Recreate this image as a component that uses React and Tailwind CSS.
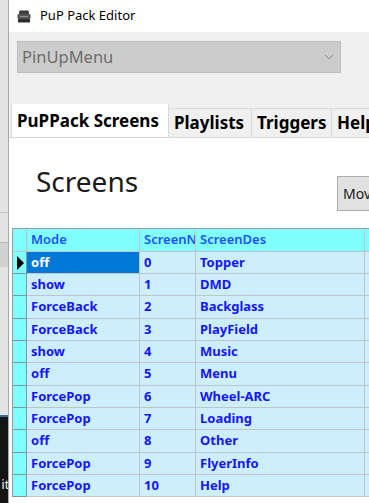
import React from "react";

const rows = [
  ["off", "0", "Topper"],
  ["show", "1", "DMD"],
  ["ForceBack", "2", "Backglass"],
  ["ForceBack", "3", "PlayField"],
  ["show", "4", "Music"],
  ["off", "5", "Menu"],
  ["ForcePop", "6", "Wheel-ARC"],
  ["ForcePop", "7", "Loading"],
  ["off", "8", "Other"],
  ["ForcePop", "9", "FlyerInfo"],
  ["ForcePop", "10", "Help"],
];

function AppIcon() {
  return (
    <svg width="14" height="13" viewBox="0 0 14 13">
      <rect x="2" y="0.5" width="10" height="4" rx="1.5" fill="#3c3c3c" />
      <rect x="0.5" y="4" width="13" height="5" rx="1" fill="#555" />
      <rect x="1" y="9" width="12" height="3.5" rx="0.5" fill="#2e2e2e" />
      <line x1="3" y1="6.5" x2="11" y2="6.5" stroke="#999" strokeWidth="1" />
    </svg>
  );
}

function LeftStrip() {
  return (
    <div className="w-[9px] shrink-0 flex flex-col bg-[#e3e3e3] border-r border-[#a9a9a9]">
      <div className="h-[213px] border-b border-[#c4c4c4]" />
      <div className="h-[30px] border-b border-[#b9b9b9]" />
      <div className="h-[24px] bg-[#d2d2d2]" />
      <div className="flex-1" />
      <div className="h-[2px] bg-[#3b6aa0]" />
      <div className="h-[86px] bg-[#141414] flex items-end justify-end pb-[12px] overflow-hidden">
        <span className="text-white text-[12px] leading-none -mr-[1px]">it</span>
      </div>
    </div>
  );
}

function Grid() {
  const base = "border-r border-b border-[#c3c3c3] flex items-center overflow-hidden whitespace-nowrap";
  const head = `${base} h-[23px] bg-[#80ffff] px-[4px] text-[#1f4fff] font-semibold`;
  return (
    <div className="grid grid-cols-[14px_113px_56px_169px_60px] border-l border-t border-[#9c9c9c] text-[13px] font-bold text-[#1414ff]">
      <div className={head} />
      <div className={head}>Mode</div>
      <div className={head}>ScreenNum</div>
      <div className={head}>ScreenDes</div>
      <div className={head} />
      {rows.map((r, i) => {
        const h = i % 3 === 2 ? "h-[23px]" : "h-[22px]";
        const cell = `${base} ${h} px-[4px]`;
        return (
          <React.Fragment key={i}>
            <div className={`border-r border-b border-[#7a9a9a] ${h} bg-[#80ffff] flex items-center justify-center`}>
              {i === 0 && (
                <svg width="8" height="14" viewBox="0 0 8 14" className="shrink-0">
                  <path d="M1 0 L8 7 L1 14 Z" fill="#000" />
                </svg>
              )}
            </div>
            <div className={`${cell} ${i === 0 ? "bg-[#0078d7] text-white" : "bg-[#cdeffd]"}`}>{r[0]}</div>
            <div className={`${cell} bg-[#cdeffd]`}>{r[1]}</div>
            <div className={`${cell} bg-[#cdeffd]`}>{r[2]}</div>
            <div className={`${cell} bg-[#cdeffd]`} />
          </React.Fragment>
        );
      })}
    </div>
  );
}

export default function App() {
  return (
    <div
      className="flex w-[369px] h-[503px] overflow-hidden bg-white"
      style={{ fontFamily: '"Noto Sans", "Open Sans", sans-serif' }}
    >
      <LeftStrip />
      <div className="flex-1 min-w-0 flex flex-col">
        <div className="h-[32px] bg-white flex items-center pl-[8px] gap-[9px] shrink-0">
          <AppIcon />
          <span className="text-[13px] text-black">PuP Pack Editor</span>
        </div>
        <div className="flex-1 flex flex-col bg-[#f0f0f0] min-h-0">
          <div className="mt-[9px] ml-[8px] w-[324px] h-[32px] bg-[#cccccc] border border-[#bdbdbd] flex items-center justify-between pl-[4px] pr-[6px] shrink-0">
            <span className="text-[16.5px] text-[#6d6d6d]">PinUpMenu</span>
            <svg width="10" height="6" viewBox="0 0 10 6">
              <path d="M1 1 L5 5 L9 1" fill="none" stroke="#8a8a8a" strokeWidth="1" />
            </svg>
          </div>
          <div className="mt-[31px] h-[33px] flex items-end pl-[2px] shrink-0 relative z-10 text-[17px] font-bold text-black whitespace-nowrap overflow-hidden">
            <div className="shrink-0 h-[34px] w-[158px] bg-white border border-b-0 border-[#d9d9d9] flex items-center pl-[5px]">
              PuPPack Screens
            </div>
            <div className="shrink-0 h-[29px] w-[83px] bg-[#f0f0f0] border-t border-r border-[#d9d9d9] flex items-center pl-[5px]">
              Playlists
            </div>
            <div className="shrink-0 h-[29px] w-[80px] bg-[#f0f0f0] border-t border-r border-[#d9d9d9] flex items-center pl-[5px]">
              Triggers
            </div>
            <div className="shrink-0 h-[29px] w-[60px] bg-[#f0f0f0] border-t border-[#d9d9d9] flex items-center pl-[5px]">
              Help
            </div>
          </div>
          <div className="flex-1 bg-white border-t border-[#d9d9d9] pl-[3px] flex flex-col overflow-hidden">
            <div className="mt-[29px] h-[44px] flex items-start shrink-0">
              <div className="w-[325px] shrink-0 pl-[24px] text-[28px] text-[#1a1a1a] leading-none">Screens</div>
              <div className="mt-[9px] w-[70px] h-[35px] shrink-0 bg-[#e1e1e1] border border-[#adadad] flex items-center pl-[5px] text-[14px] text-[#1a1a1a]">
                Move
              </div>
            </div>
            <div className="mt-[17px] w-[420px]">
              <Grid />
            </div>
          </div>
        </div>
      </div>
    </div>
  );
}
